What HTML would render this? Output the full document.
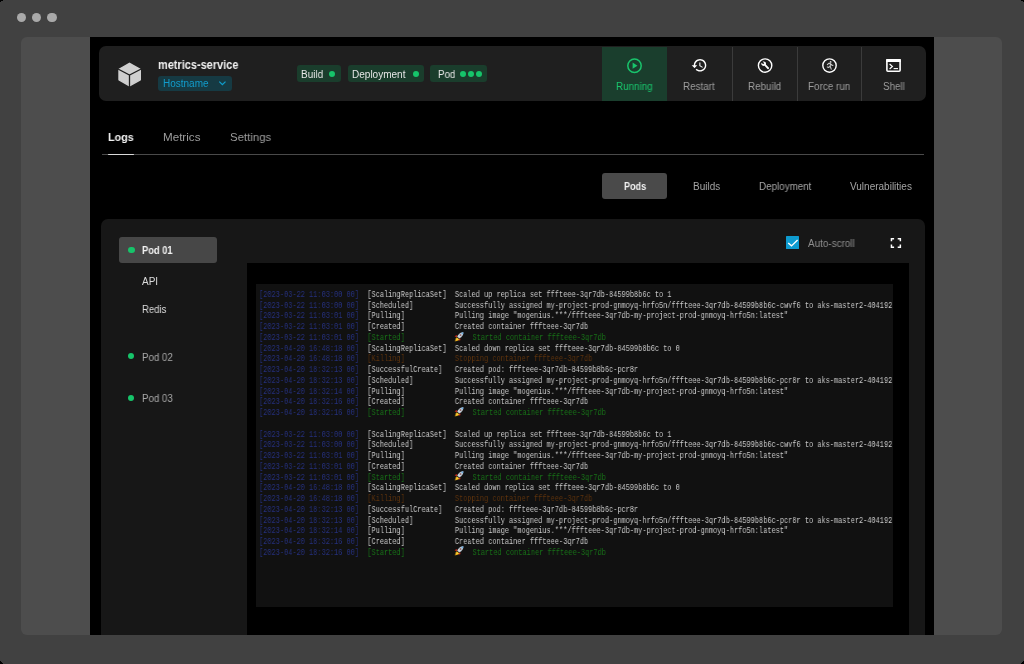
<!DOCTYPE html>
<html><head><meta charset="utf-8"><style>
html,body{margin:0;padding:0;background:#000;width:1024px;height:664px;overflow:hidden}
#root{position:relative;width:1024px;height:664px;background:#414141;overflow:hidden;font-family:"Liberation Sans",sans-serif}
.b{position:absolute;display:block}
.t{position:absolute;white-space:nowrap;line-height:1;transform-origin:0 0;will-change:transform}
#clip{position:absolute;left:90px;top:37px;width:843.7px;height:598px;overflow:hidden}
#log{position:absolute;left:255.7px;top:284px;width:637px;height:323.2px;overflow:hidden}
#lines{position:absolute;left:3.3px;top:5.9px;width:1200px;height:400px;font-family:"Liberation Mono",monospace;font-size:8.4px;line-height:10.745px;white-space:pre;color:#d6d6d6;will-change:transform;transform:scaleX(0.829);transform-origin:0 0}
.ll{position:absolute;left:0;height:10.745px}
.ts{color:#26317f}
.rkw{display:inline-block;width:21.3px;height:10px;position:relative;vertical-align:top}
.rk{position:absolute;left:0px;top:-1.4px;width:10.9px;height:10px}
</style></head><body><div id="root">
<div class="b" style="left:0px;top:0px;width:3px;height:1px;background:#000;border-radius:0px;"></div><div class="b" style="left:0px;top:1px;width:1px;height:1px;background:#000;border-radius:0px;"></div><div class="b" style="left:1021px;top:0px;width:3px;height:1px;background:#000;border-radius:0px;"></div><div class="b" style="left:1023px;top:1px;width:1px;height:1px;background:#000;border-radius:0px;"></div><div class="b" style="left:0px;top:663px;width:3px;height:1px;background:#000;border-radius:0px;"></div><div class="b" style="left:0px;top:662px;width:2px;height:1px;background:#000;border-radius:0px;"></div><div class="b" style="left:0px;top:661px;width:1px;height:1px;background:#000;border-radius:0px;"></div><div class="b" style="left:1021px;top:663px;width:3px;height:1px;background:#000;border-radius:0px;"></div><div class="b" style="left:1022px;top:662px;width:2px;height:1px;background:#000;border-radius:0px;"></div><div class="b" style="left:1023px;top:661px;width:1px;height:1px;background:#000;border-radius:0px;"></div><div class="b" style="left:16.7px;top:12.8px;width:9.6px;height:9.6px;background:#a9a9a9;border-radius:50%"></div><div class="b" style="left:31.900000000000002px;top:12.8px;width:9.6px;height:9.6px;background:#a9a9a9;border-radius:50%"></div><div class="b" style="left:47.2px;top:12.8px;width:9.6px;height:9.6px;background:#a9a9a9;border-radius:50%"></div><div class="b" style="left:21px;top:37px;width:981px;height:598px;background:#4d4d4d;border-radius:6px;"></div>
<div id="clip"><div style="position:absolute;left:-90px;top:-37px;width:1024px;height:664px">
<div class="b" style="left:90px;top:37px;width:843.7px;height:598px;background:#000;border-radius:0px;"></div><div class="b" style="left:99.4px;top:46.3px;width:826.6px;height:55.0px;background:#1f1f1f;border-radius:7px;"></div><div class="b" style="left:602px;top:46.8px;width:65.29999999999995px;height:54.0px;background:#1a3e2d;border-radius:0px;"></div><div class="b" style="left:732.2px;top:47.3px;width:1.0px;height:53.400000000000006px;background:#3b3b3b;border-radius:0px;"></div><div class="b" style="left:797px;top:47.3px;width:1px;height:53.400000000000006px;background:#3b3b3b;border-radius:0px;"></div><div class="b" style="left:861.3px;top:47.3px;width:1.0px;height:53.400000000000006px;background:#3b3b3b;border-radius:0px;"></div><div class="b" style="left:157.6px;top:75.8px;width:74.30000000000001px;height:14.900000000000006px;background:#163a43;border-radius:3px;"></div><div class="b" style="left:296.7px;top:65px;width:44.10000000000002px;height:16.799999999999997px;background:#1a3d2c;border-radius:3px;"></div><div class="b" style="left:347.8px;top:65px;width:76.19999999999999px;height:16.799999999999997px;background:#1a3d2c;border-radius:3px;"></div><div class="b" style="left:430.2px;top:65px;width:57.19999999999999px;height:16.799999999999997px;background:#1a3d2c;border-radius:3px;"></div><div class="b" style="left:328.9px;top:70.80000000000001px;width:6.2px;height:6.2px;background:#16c46a;border-radius:50%"></div><div class="b" style="left:412.7px;top:70.80000000000001px;width:6.2px;height:6.2px;background:#16c46a;border-radius:50%"></div><div class="b" style="left:459.9px;top:70.80000000000001px;width:6.2px;height:6.2px;background:#16c46a;border-radius:50%"></div><div class="b" style="left:467.9px;top:70.80000000000001px;width:6.2px;height:6.2px;background:#16c46a;border-radius:50%"></div><div class="b" style="left:475.9px;top:70.80000000000001px;width:6.2px;height:6.2px;background:#16c46a;border-radius:50%"></div><div class="b" style="left:102px;top:154px;width:822px;height:1px;background:#4a4a4a;border-radius:0px;"></div><div class="b" style="left:107.6px;top:153.5px;width:26.0px;height:1.6999999999999886px;background:#d8d8d8;border-radius:1px;"></div><div class="b" style="left:602.3px;top:173.4px;width:65.20000000000005px;height:25.799999999999983px;background:#4a4a4a;border-radius:3px;"></div><div class="b" style="left:101.2px;top:218.5px;width:824.0999999999999px;height:441.5px;background:#171717;border-radius:7px;"></div><div class="b" style="left:119.3px;top:237.1px;width:97.7px;height:25.50000000000003px;background:#474747;border-radius:3px;"></div><div class="b" style="left:128.4px;top:246.9px;width:6.2px;height:6.2px;background:#16c46a;border-radius:50%"></div><div class="b" style="left:128.3px;top:353.2px;width:6.2px;height:6.2px;background:#16c46a;border-radius:50%"></div><div class="b" style="left:128.3px;top:394.7px;width:6.2px;height:6.2px;background:#16c46a;border-radius:50%"></div><div class="b" style="left:785.9px;top:236.2px;width:13.200000000000045px;height:13.200000000000017px;background:#0e9bcf;border-radius:0.5px;"></div><div class="b" style="left:247px;top:263px;width:662px;height:372px;background:#000;border-radius:0px;"></div><div class="b" style="left:255.7px;top:284px;width:637.0px;height:323.20000000000005px;background:#111;border-radius:0px;"></div>
<svg class="b" style="left:112px;top:58px" width="36" height="34" viewBox="112 58 36 34">
<path d="M129.5 63.3 L140.3 69.3 L140.3 79.8 L129.5 85.8 L119 79.8 L119 69.3 Z" fill="#cfcfcf" stroke="#cfcfcf" stroke-width="1.4" stroke-linejoin="round"/>
<path d="M118 69 L129.5 75 L141.2 69 M129.5 75 L129.5 87" fill="none" stroke="#1f1f1f" stroke-width="1.3"/>
</svg><svg class="b" style="left:624px;top:55px" width="22" height="22" viewBox="624 55 22 22">
<circle cx="634.5" cy="65.7" r="6.7" fill="none" stroke="#19c46c" stroke-width="1.5"/>
<path d="M632.6 62.6 L637.5 65.7 L632.6 68.8 Z" fill="#19c46c"/>
</svg><svg class="b" style="left:691.4px;top:57.3px" width="16.7" height="16.7" viewBox="0 0 24 24">
<path fill="#fff" d="M13 3c-4.97 0-9 4.03-9 9H1l3.89 3.89.07.14L9 12H6c0-3.87 3.13-7 7-7s7 3.13 7 7-3.13 7-7 7c-1.93 0-3.68-.79-4.94-2.06l-1.42 1.42C8.27 19.99 10.51 21 13 21c4.97 0 9-4.03 9-9s-4.03-9-9-9zm-1 5v5l4.28 2.54.72-1.21-3.5-2.08V8H12z"/>
</svg><svg class="b" style="left:755px;top:55px" width="22" height="22" viewBox="755 55 22 22">
<circle cx="765.1" cy="65.6" r="6.7" fill="none" stroke="#fff" stroke-width="1.4"/>
</svg><svg class="b" style="left:760.7px;top:61.4px" width="8.6" height="8.6" viewBox="0 0 24 24">
<path fill="#fff" d="M22.7 19l-9.1-9.1c.9-2.3.4-5-1.5-6.9-2-2-5-2.4-7.4-1.3L9 6 6 9 1.6 4.7C.4 7.1.9 10.1 2.9 12.1c1.9 1.9 4.6 2.4 6.9 1.5l9.1 9.1c.4.4 1 .4 1.4 0l2.3-2.3c.5-.4.5-1.1.1-1.4z"/>
</svg><svg class="b" style="left:819px;top:55px" width="22" height="22" viewBox="819 55 22 22">
<circle cx="829.5" cy="65.6" r="6.7" fill="none" stroke="#fff" stroke-width="1.4"/>
<circle cx="830.6" cy="61.9" r="0.9" fill="#ddd"/>
<path d="M827.4 64.6 L829.0 63.2 L830.4 63.6 L830.2 66.2 L831.2 69.2 M830.4 63.6 L831.9 65.2 L832.9 65.4 M830.2 66.2 L828.8 67.4 L827.3 67" fill="none" stroke="#ccc" stroke-width="1.1" stroke-linecap="round" stroke-linejoin="round"/>
</svg><svg class="b" style="left:883px;top:55px" width="22" height="22" viewBox="883 55 22 22">
<rect x="886.9" y="59.7" width="13.2" height="11.6" rx="1" fill="none" stroke="#fff" stroke-width="1.6"/>
<rect x="886.2" y="59" width="14.6" height="3" fill="#fff"/>
<path d="M889.6 64 L892.4 66.5 L889.6 69" fill="none" stroke="#fff" stroke-width="1.2"/>
<path d="M893.6 68.6 H898" stroke="#fff" stroke-width="1.1"/>
</svg><svg class="b" style="left:217px;top:79px" width="11" height="9" viewBox="217 79 11 9">
<path d="M219.3 81.6 L222.4 84.6 L225.5 81.6" fill="none" stroke="#0f9dcc" stroke-width="1.3"/>
</svg><svg class="b" style="left:785.9px;top:236.3px" width="13" height="13.2" viewBox="0 0 13 13.2">
<path d="M2.2 6.9 L5.5 9.9 L11.6 4.0" fill="none" stroke="#fff" stroke-width="1.4"/>
</svg><svg class="b" style="left:889px;top:236px" width="14" height="14" viewBox="889 236 14 14">
<path d="M891.45 241.3 V238.65 H894.1 M897.7 238.65 H900.35 V241.3 M900.35 244.5 V247.15 H897.7 M894.1 247.15 H891.45 V244.5" fill="none" stroke="#fff" stroke-width="1.5"/>
</svg>
<div class="t" style="left:158.30px;top:59.34px;font-size:12px;font-weight:700;color:#f2f2f2;transform:scaleX(0.9119)">metrics-service</div>
<div class="t" style="left:163.30px;top:79.03px;font-size:10px;font-weight:400;color:#129ccc;transform:scaleX(0.9997)">Hostname</div>
<div class="t" style="left:301.30px;top:69.73px;font-size:10px;font-weight:400;color:#e6e6e6;transform:scaleX(0.9919)">Build</div>
<div class="t" style="left:352.40px;top:69.73px;font-size:10px;font-weight:400;color:#e6e6e6;transform:scaleX(1.0022)">Deployment</div>
<div class="t" style="left:437.70px;top:69.73px;font-size:10px;font-weight:400;color:#e6e6e6;transform:scaleX(0.9692)">Pod</div>
<div class="t" style="left:616.20px;top:81.64px;font-size:10px;font-weight:400;color:#19c46c;transform:scaleX(0.9812)">Running</div>
<div class="t" style="left:682.50px;top:81.73px;font-size:10px;font-weight:400;color:#9d9d9d;transform:scaleX(0.9830)">Restart</div>
<div class="t" style="left:747.70px;top:81.73px;font-size:10px;font-weight:400;color:#9d9d9d;transform:scaleX(0.9805)">Rebuild</div>
<div class="t" style="left:807.70px;top:81.73px;font-size:10px;font-weight:400;color:#9d9d9d;transform:scaleX(0.9874)">Force run</div>
<div class="t" style="left:882.50px;top:81.73px;font-size:10px;font-weight:400;color:#9d9d9d;transform:scaleX(0.9766)">Shell</div>
<div class="t" style="left:107.60px;top:132.47px;font-size:11.5px;font-weight:700;color:#f2f2f2;transform:scaleX(0.9382)">Logs</div>
<div class="t" style="left:162.70px;top:132.47px;font-size:11.5px;font-weight:400;color:#9d9d9d;transform:scaleX(1.0106)">Metrics</div>
<div class="t" style="left:229.90px;top:132.47px;font-size:11.5px;font-weight:400;color:#9d9d9d;transform:scaleX(0.9904)">Settings</div>
<div class="t" style="left:623.70px;top:182.44px;font-size:10px;font-weight:700;color:#f2f2f2;transform:scaleX(0.9041)">Pods</div>
<div class="t" style="left:692.80px;top:182.44px;font-size:10px;font-weight:400;color:#a5a5a5;transform:scaleX(0.9950)">Builds</div>
<div class="t" style="left:758.90px;top:182.44px;font-size:10px;font-weight:400;color:#a5a5a5;transform:scaleX(0.9817)">Deployment</div>
<div class="t" style="left:849.60px;top:182.44px;font-size:10px;font-weight:400;color:#a5a5a5;transform:scaleX(1.0002)">Vulnerabilities</div>
<div class="t" style="left:141.80px;top:246.19px;font-size:10px;font-weight:700;color:#f2f2f2;transform:scaleX(0.9300)">Pod 01</div>
<div class="t" style="left:141.70px;top:276.63px;font-size:10px;font-weight:400;color:#dcdcdc;transform:scaleX(0.9974)">API</div>
<div class="t" style="left:141.70px;top:305.43px;font-size:10px;font-weight:400;color:#dcdcdc;transform:scaleX(0.9544)">Redis</div>
<div class="t" style="left:141.70px;top:352.83px;font-size:10px;font-weight:400;color:#a8a8a8;transform:scaleX(0.9710)">Pod 02</div>
<div class="t" style="left:141.70px;top:394.33px;font-size:10px;font-weight:400;color:#a8a8a8;transform:scaleX(0.9710)">Pod 03</div>
<div class="t" style="left:807.80px;top:239.34px;font-size:10px;font-weight:400;color:#8e8e8e;transform:scaleX(0.9869)">Auto-scroll</div>
</div>
<div id="log" style="left:165.7px;top:247px"><div id="lines"><div class="ll" style="top:0.00px"><span class="ts">[2023-03-22 11:03:00 00]  </span><span style="color:#cacaca">[ScalingReplicaSet]  </span><span style="color:#cacaca">Scaled up replica set fffteee-3qr7db-84599b8b6c to 1</span></div><div class="ll" style="top:10.74px"><span class="ts">[2023-03-22 11:03:00 00]  </span><span style="color:#cacaca">[Scheduled]          </span><span style="color:#cacaca">Successfully assigned my-project-prod-gnmoyq-hrfo5n/fffteee-3qr7db-84599b8b6c-cwvf6 to aks-master2-404192</span></div><div class="ll" style="top:21.49px"><span class="ts">[2023-03-22 11:03:01 00]  </span><span style="color:#cacaca">[Pulling]            </span><span style="color:#cacaca">Pulling image &quot;mogenius.***/fffteee-3qr7db-my-project-prod-gnmoyq-hrfo5n:latest&quot;</span></div><div class="ll" style="top:32.23px"><span class="ts">[2023-03-22 11:03:01 00]  </span><span style="color:#cacaca">[Created]            </span><span style="color:#cacaca">Created container fffteee-3qr7db</span></div><div class="ll" style="top:42.98px"><span class="ts">[2023-03-22 11:03:01 00]  </span><span style="color:#187318">[Started]            </span><span class="rkw"><svg class="rk" viewBox="0 0 9 10" preserveAspectRatio="none"><path d="M8.6 0.3 C6.8 0.2 4.6 1.2 3.3 3.2 L2.6 4.6 L4.5 6.5 L5.9 5.8 C7.9 4.5 8.8 2.2 8.6 0.3Z" fill="#c9d3dc"/><path d="M8.6 0.3 C7.8 0.3 7 0.6 6.4 0.9 L8.2 2.7 C8.5 2 8.6 1.1 8.6 0.3Z" fill="#6aa9e0"/><circle cx="5.9" cy="3.1" r="0.8" fill="#6b3030"/><path d="M2.7 3.3 L0.9 3.6 L0.4 5.1 L2.2 4.9Z M5.8 6.4 L5.5 8.2 L4 8.7 L4.2 6.9Z" fill="#d42a1e"/><path d="M2.3 5.3 L1.2 6.3 L0.3 9.6 L3.6 8.6 L4.6 7.5Z" fill="#f2b51c"/><path d="M2.4 6.2 L1.8 8 L3.4 7.5Z" fill="#f7e04a"/></svg></span><span style="color:#187318">Started container fffteee-3qr7db</span></div><div class="ll" style="top:53.72px"><span class="ts">[2023-04-20 16:48:18 00]  </span><span style="color:#cacaca">[ScalingReplicaSet]  </span><span style="color:#cacaca">Scaled down replica set fffteee-3qr7db-84599b8b6c to 0</span></div><div class="ll" style="top:64.47px"><span class="ts">[2023-04-20 16:48:18 00]  </span><span style="color:#5e330d">[Killing]            </span><span style="color:#5e330d">Stopping container fffteee-3qr7db</span></div><div class="ll" style="top:75.21px"><span class="ts">[2023-04-20 18:32:13 00]  </span><span style="color:#cacaca">[SuccessfulCreate]   </span><span style="color:#cacaca">Created pod: fffteee-3qr7db-84599b8b6c-pcr8r</span></div><div class="ll" style="top:85.96px"><span class="ts">[2023-04-20 18:32:13 00]  </span><span style="color:#cacaca">[Scheduled]          </span><span style="color:#cacaca">Successfully assigned my-project-prod-gnmoyq-hrfo5n/fffteee-3qr7db-84599b8b6c-pcr8r to aks-master2-404192</span></div><div class="ll" style="top:96.70px"><span class="ts">[2023-04-20 18:32:14 00]  </span><span style="color:#cacaca">[Pulling]            </span><span style="color:#cacaca">Pulling image &quot;mogenius.***/fffteee-3qr7db-my-project-prod-gnmoyq-hrfo5n:latest&quot;</span></div><div class="ll" style="top:107.45px"><span class="ts">[2023-04-20 18:32:16 00]  </span><span style="color:#cacaca">[Created]            </span><span style="color:#cacaca">Created container fffteee-3qr7db</span></div><div class="ll" style="top:118.19px"><span class="ts">[2023-04-20 18:32:16 00]  </span><span style="color:#187318">[Started]            </span><span class="rkw"><svg class="rk" viewBox="0 0 9 10" preserveAspectRatio="none"><path d="M8.6 0.3 C6.8 0.2 4.6 1.2 3.3 3.2 L2.6 4.6 L4.5 6.5 L5.9 5.8 C7.9 4.5 8.8 2.2 8.6 0.3Z" fill="#c9d3dc"/><path d="M8.6 0.3 C7.8 0.3 7 0.6 6.4 0.9 L8.2 2.7 C8.5 2 8.6 1.1 8.6 0.3Z" fill="#6aa9e0"/><circle cx="5.9" cy="3.1" r="0.8" fill="#6b3030"/><path d="M2.7 3.3 L0.9 3.6 L0.4 5.1 L2.2 4.9Z M5.8 6.4 L5.5 8.2 L4 8.7 L4.2 6.9Z" fill="#d42a1e"/><path d="M2.3 5.3 L1.2 6.3 L0.3 9.6 L3.6 8.6 L4.6 7.5Z" fill="#f2b51c"/><path d="M2.4 6.2 L1.8 8 L3.4 7.5Z" fill="#f7e04a"/></svg></span><span style="color:#187318">Started container fffteee-3qr7db</span></div><div class="ll" style="top:139.69px"><span class="ts">[2023-03-22 11:03:00 00]  </span><span style="color:#cacaca">[ScalingReplicaSet]  </span><span style="color:#cacaca">Scaled up replica set fffteee-3qr7db-84599b8b6c to 1</span></div><div class="ll" style="top:150.43px"><span class="ts">[2023-03-22 11:03:00 00]  </span><span style="color:#cacaca">[Scheduled]          </span><span style="color:#cacaca">Successfully assigned my-project-prod-gnmoyq-hrfo5n/fffteee-3qr7db-84599b8b6c-cwvf6 to aks-master2-404192</span></div><div class="ll" style="top:161.17px"><span class="ts">[2023-03-22 11:03:01 00]  </span><span style="color:#cacaca">[Pulling]            </span><span style="color:#cacaca">Pulling image &quot;mogenius.***/fffteee-3qr7db-my-project-prod-gnmoyq-hrfo5n:latest&quot;</span></div><div class="ll" style="top:171.92px"><span class="ts">[2023-03-22 11:03:01 00]  </span><span style="color:#cacaca">[Created]            </span><span style="color:#cacaca">Created container fffteee-3qr7db</span></div><div class="ll" style="top:182.66px"><span class="ts">[2023-03-22 11:03:01 00]  </span><span style="color:#187318">[Started]            </span><span class="rkw"><svg class="rk" viewBox="0 0 9 10" preserveAspectRatio="none"><path d="M8.6 0.3 C6.8 0.2 4.6 1.2 3.3 3.2 L2.6 4.6 L4.5 6.5 L5.9 5.8 C7.9 4.5 8.8 2.2 8.6 0.3Z" fill="#c9d3dc"/><path d="M8.6 0.3 C7.8 0.3 7 0.6 6.4 0.9 L8.2 2.7 C8.5 2 8.6 1.1 8.6 0.3Z" fill="#6aa9e0"/><circle cx="5.9" cy="3.1" r="0.8" fill="#6b3030"/><path d="M2.7 3.3 L0.9 3.6 L0.4 5.1 L2.2 4.9Z M5.8 6.4 L5.5 8.2 L4 8.7 L4.2 6.9Z" fill="#d42a1e"/><path d="M2.3 5.3 L1.2 6.3 L0.3 9.6 L3.6 8.6 L4.6 7.5Z" fill="#f2b51c"/><path d="M2.4 6.2 L1.8 8 L3.4 7.5Z" fill="#f7e04a"/></svg></span><span style="color:#187318">Started container fffteee-3qr7db</span></div><div class="ll" style="top:193.41px"><span class="ts">[2023-04-20 16:48:18 00]  </span><span style="color:#cacaca">[ScalingReplicaSet]  </span><span style="color:#cacaca">Scaled down replica set fffteee-3qr7db-84599b8b6c to 0</span></div><div class="ll" style="top:204.15px"><span class="ts">[2023-04-20 16:48:18 00]  </span><span style="color:#5e330d">[Killing]            </span><span style="color:#5e330d">Stopping container fffteee-3qr7db</span></div><div class="ll" style="top:214.90px"><span class="ts">[2023-04-20 18:32:13 00]  </span><span style="color:#cacaca">[SuccessfulCreate]   </span><span style="color:#cacaca">Created pod: fffteee-3qr7db-84599b8b6c-pcr8r</span></div><div class="ll" style="top:225.64px"><span class="ts">[2023-04-20 18:32:13 00]  </span><span style="color:#cacaca">[Scheduled]          </span><span style="color:#cacaca">Successfully assigned my-project-prod-gnmoyq-hrfo5n/fffteee-3qr7db-84599b8b6c-pcr8r to aks-master2-404192</span></div><div class="ll" style="top:236.39px"><span class="ts">[2023-04-20 18:32:14 00]  </span><span style="color:#cacaca">[Pulling]            </span><span style="color:#cacaca">Pulling image &quot;mogenius.***/fffteee-3qr7db-my-project-prod-gnmoyq-hrfo5n:latest&quot;</span></div><div class="ll" style="top:247.13px"><span class="ts">[2023-04-20 18:32:16 00]  </span><span style="color:#cacaca">[Created]            </span><span style="color:#cacaca">Created container fffteee-3qr7db</span></div><div class="ll" style="top:257.88px"><span class="ts">[2023-04-20 18:32:16 00]  </span><span style="color:#187318">[Started]            </span><span class="rkw"><svg class="rk" viewBox="0 0 9 10" preserveAspectRatio="none"><path d="M8.6 0.3 C6.8 0.2 4.6 1.2 3.3 3.2 L2.6 4.6 L4.5 6.5 L5.9 5.8 C7.9 4.5 8.8 2.2 8.6 0.3Z" fill="#c9d3dc"/><path d="M8.6 0.3 C7.8 0.3 7 0.6 6.4 0.9 L8.2 2.7 C8.5 2 8.6 1.1 8.6 0.3Z" fill="#6aa9e0"/><circle cx="5.9" cy="3.1" r="0.8" fill="#6b3030"/><path d="M2.7 3.3 L0.9 3.6 L0.4 5.1 L2.2 4.9Z M5.8 6.4 L5.5 8.2 L4 8.7 L4.2 6.9Z" fill="#d42a1e"/><path d="M2.3 5.3 L1.2 6.3 L0.3 9.6 L3.6 8.6 L4.6 7.5Z" fill="#f2b51c"/><path d="M2.4 6.2 L1.8 8 L3.4 7.5Z" fill="#f7e04a"/></svg></span><span style="color:#187318">Started container fffteee-3qr7db</span></div></div></div>
</div>
</div></body></html>
